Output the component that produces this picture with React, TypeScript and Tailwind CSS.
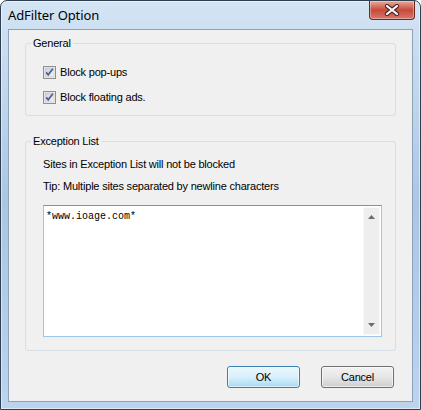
function CheckBox() {
  return (
    <svg width="13" height="13" viewBox="0 0 13 13" className="shrink-0">
      <defs>
        <linearGradient id="cbfill" x1="0" y1="0" x2="1" y2="1">
          <stop offset="0" stopColor="#cbcfd5" />
          <stop offset="1" stopColor="#f6f6f6" />
        </linearGradient>
      </defs>
      <rect x="0.5" y="0.5" width="12" height="12" fill="#f4f4f4" stroke="#8f8f8f" />
      <rect x="2" y="2" width="9" height="9" fill="url(#cbfill)" stroke="#b9bdc3" strokeWidth="0.6" />
      <path d="M3.2 6.4 L5.2 8.8 L9.8 2.8" fill="none" stroke="#4a5f97" strokeWidth="1.7" />
    </svg>
  );
}

function CloseButton() {
  return (
    <div className="w-[46px] h-[19px] rounded-b-[4px] border border-t-0 border-[#6b2a22] bg-gradient-to-b from-[#e9a99c] via-[#c6493b] to-[#d8786a] flex items-center justify-center shadow-[inset_0_0_0_1px_rgba(255,255,255,0.35)]">
      <svg width="16" height="12" viewBox="0 0 16 12">
        <path d="M3 2 L13 10 M13 2 L3 10" stroke="#4b2420" strokeWidth="4.2" strokeLinecap="round" />
        <path d="M3 2 L13 10 M13 2 L3 10" stroke="#ffffff" strokeWidth="2.2" strokeLinecap="round" />
      </svg>
    </div>
  );
}

function ScrollArrow({ up }: { up?: boolean }) {
  return (
    <svg width="7" height="4" viewBox="0 0 7 4">
      <path d={up ? "M0 4 L3.5 0 L7 4 Z" : "M0 0 L7 0 L3.5 4 Z"} fill="#6d6d6d" />
    </svg>
  );
}

export default function App() {
  return (
    <div
      className="w-[421px] h-[410px] rounded-t-[7px] border border-[#2f3f52] bg-gradient-to-b from-[#d3e4f4] via-[#aac6e3] to-[#bcd4ec] flex flex-col shadow-[inset_0_0_0_1px_rgba(255,255,255,0.5)]"
      style={{ fontFamily: '"Liberation Sans", Arial, sans-serif' }}
    >
      <div className="h-[28px] flex items-start justify-between pl-[7px] pr-[5px]">
        <div
          className="text-[13px] leading-[13px] mt-[8px] text-black tracking-[-0.1px]"
          style={{ fontFamily: '"Noto Sans", "Open Sans", sans-serif' }}
        >
          AdFilter Option
        </div>
        <CloseButton />
      </div>
      <div className="mx-[7px] h-[373px] border border-[#8da2b8] bg-[#f0f0f0] flex flex-col pt-[6px] pl-[16px] pr-[16px] text-[11px] tracking-[-0.2px] text-black">
        <fieldset className="h-[80px] border border-[#d5dfe5] rounded-[3px] px-0">
          <legend className="ml-[5px] px-[2px] leading-[14px]">General</legend>
          <div className="pt-[16px] pl-[17px] flex flex-col gap-[12px]">
            <div className="flex items-center gap-[4px] h-[13px]">
              <CheckBox />
              <span className="leading-[13px]">Block pop-ups</span>
            </div>
            <div className="flex items-center gap-[4px] h-[13px]">
              <CheckBox />
              <span className="leading-[13px]">Block floating ads.</span>
            </div>
          </div>
        </fieldset>
        <fieldset className="mt-[18px] h-[217px] border border-[#d5dfe5] rounded-[3px] px-0">
          <legend className="ml-[5px] px-[2px] leading-[14px]">Exception List</legend>
          <div className="pt-[10px] pl-[17px] flex flex-col">
            <div className="leading-[13px]">Sites in Exception List will not be blocked</div>
            <div className="leading-[13px] mt-[9px]">Tip: Multiple sites separated by newline characters</div>
            <div className="mt-[12px] w-[339px] h-[132px] bg-white border border-[#9fc6e6] border-t-[#5a9bd3] flex">
              <div
                className="flex-1 pl-[2px] pt-[5px] text-[10px] leading-[12px] tracking-normal"
                style={{ fontFamily: '"Liberation Mono", "Courier New", monospace' }}
              >
                *www.ioage.com*
              </div>
              <div className="w-[17px] mr-[1px] my-[1px] bg-[#eeeeee] border border-[#f8f8f8] flex flex-col items-center justify-between py-[7px]">
                <ScrollArrow up />
                <ScrollArrow />
              </div>
            </div>
          </div>
        </fieldset>
        <div className="mt-[15px] flex justify-end gap-[21px] pr-[2px]">
          <button className="w-[73px] h-[22px] rounded-[3px] border border-[#3c7fb1] bg-gradient-to-b from-[#eaf6fd] via-[#d9f0fc] to-[#a7d9f5] text-[11px] leading-[20px] shadow-[inset_0_0_0_1px_rgba(255,255,255,0.6)]">
            OK
          </button>
          <button className="w-[73px] h-[22px] rounded-[3px] border border-[#707070] bg-gradient-to-b from-[#f2f2f2] via-[#e6e6e6] to-[#cfcfcf] text-[11px] leading-[20px] shadow-[inset_0_0_0_1px_rgba(255,255,255,0.6)]">
            Cancel
          </button>
        </div>
      </div>
    </div>
  );
}
